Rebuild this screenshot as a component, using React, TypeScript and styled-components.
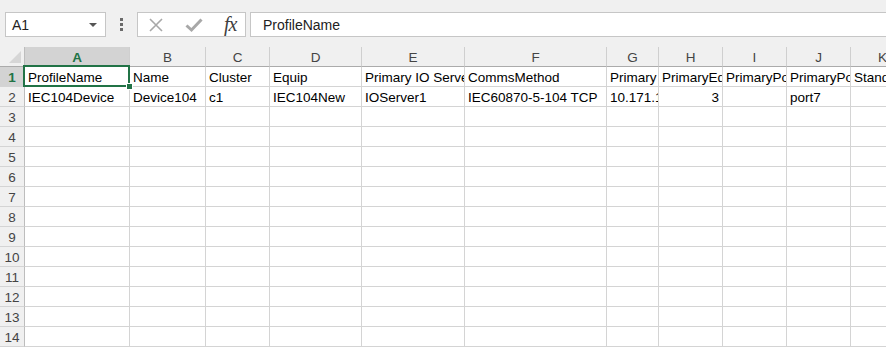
import styled, { createGlobalStyle } from "styled-components";

const GREEN = "#217346";
const GRID = "#d4d4d4";

const GlobalStyle = createGlobalStyle`
  html, body {
    margin: 0;
    padding: 0;
    background: #ffffff;
  }
  body {
    font-family: "Liberation Sans", Arial, sans-serif;
    color: #000;
  }
`;

const Window = styled.div`
  width: 886px;
  height: 357px;
  overflow: hidden;
  background: #ffffff;
`;

const Toolbar = styled.div`
  height: 47px;
  box-sizing: border-box;
  padding: 12px 0 10px 5px;
  background: #f0f0f0;
  display: flex;
  align-items: stretch;
`;

const NameBox = styled.div`
  width: 101px;
  box-sizing: border-box;
  border: 1px solid #c6c6c6;
  background: #fff;
  display: flex;
  align-items: center;
  justify-content: space-between;
  padding: 0 6px 0 6px;
  font-size: 14px;
  color: #222;
`;

const Caret = styled.span`
  width: 0;
  height: 0;
  border-left: 4px solid transparent;
  border-right: 4px solid transparent;
  border-top: 4px solid #555;
  margin-right: 2px;
`;

const Grip = styled.div`
  width: 31px;
  display: flex;
  align-items: center;
  justify-content: center;
`;

const FxBox = styled.div`
  width: 109px;
  box-sizing: border-box;
  border: 1px solid #c6c6c6;
  background: #fff;
  display: flex;
  align-items: center;
  padding-left: 10px;
  gap: 21px;
  margin-right: 4px;
`;

const Fx = styled.span`
  font-family: "Liberation Serif", "Times New Roman", serif;
  font-style: italic;
  font-size: 20px;
  color: #404040;
  letter-spacing: -1px;
  margin-left: 0;
`;

const FormulaInput = styled.div`
  flex: 1;
  box-sizing: border-box;
  border: 1px solid #c6c6c6;
  border-right: none;
  background: #fff;
  display: flex;
  align-items: center;
  padding-left: 12px;
  font-size: 14px;
  color: #222;
`;

const Sheet = styled.div<{ $cols: number[] }>`
  display: grid;
  grid-template-columns: ${(p) => p.$cols.map((c) => `${c}px`).join(" ")};
  grid-auto-rows: 20px;
  width: max-content;
  font-size: 13.5px;
`;

const Corner = styled.div`
  background: #f0f0f0;
  border-right: 1px solid #bdbdbd;
  border-bottom: 1px solid #ababab;
  box-sizing: border-box;
  display: flex;
  align-items: flex-end;
  justify-content: flex-end;
  padding: 0 3px 3px 0;
`;

const ColHeader = styled.div<{ $selected?: boolean }>`
  box-sizing: border-box;
  background: ${(p) => (p.$selected ? "#d3d3d3" : "#f0f0f0")};
  border-right: 1px solid #cfcfcf;
  border-bottom: 1px solid #ababab;
  display: flex;
  align-items: center;
  justify-content: center;
  padding-top: 1px;
  color: ${(p) => (p.$selected ? GREEN : "#444")};
  font-weight: ${(p) => (p.$selected ? 700 : 400)};
`;

const RowHeader = styled.div<{ $selected?: boolean }>`
  box-sizing: border-box;
  background: ${(p) => (p.$selected ? "#d3d3d3" : "#f0f0f0")};
  border-right: 1px solid #bdbdbd;
  border-bottom: 1px solid #d4d4d4;
  display: flex;
  align-items: center;
  justify-content: center;
  padding-top: 1px;
  color: ${(p) => (p.$selected ? GREEN : "#444")};
  font-weight: ${(p) => (p.$selected ? 700 : 400)};
`;

const Cell = styled.div<{ $align?: "left" | "right"; $active?: boolean }>`
  position: relative;
  box-sizing: border-box;
  border-right: 1px solid ${GRID};
  border-bottom: 1px solid ${GRID};
  padding: 2px 3px 0 3px;
  line-height: 18px;
  white-space: nowrap;
  overflow: ${(p) => (p.$active ? "visible" : "hidden")};
  text-align: ${(p) => p.$align ?? "left"};
  z-index: ${(p) => (p.$active ? 2 : 0)};

  ${(p) =>
    p.$active &&
    `
    &::after {
      content: '';
      position: absolute;
      left: -2px;
      top: -2px;
      right: -1px;
      bottom: -1px;
      border: 2px solid ${GREEN};
    }
    &::before {
      content: '';
      position: absolute;
      right: -4px;
      bottom: -4px;
      width: 5px;
      height: 5px;
      background: ${GREEN};
      border: 1px solid #fff;
      z-index: 3;
    }
  `}
`;

const COLS = [25, 105, 76, 64, 92, 103, 142, 52, 64, 64, 64, 64];
const LETTERS = ["A", "B", "C", "D", "E", "F", "G", "H", "I", "J", "K"];

type CellData = { text: string; align?: "left" | "right" };

// texts as far as the narrow columns show them
const ROWS: CellData[][] = [
  [
    { text: "ProfileName" },
    { text: "Name" },
    { text: "Cluster" },
    { text: "Equip" },
    { text: "Primary IO Serve" },
    { text: "CommsMethod" },
    { text: "Primary" },
    { text: "PrimaryEq" },
    { text: "PrimaryPo" },
    { text: "PrimaryPo" },
    { text: "Stand" },
  ],
  [
    { text: "IEC104Device" },
    { text: "Device104" },
    { text: "c1" },
    { text: "IEC104New" },
    { text: "IOServer1" },
    { text: "IEC60870-5-104 TCP" },
    { text: "10.171.1" },
    { text: "3", align: "right" },
    { text: "" },
    { text: "port7" },
    { text: "" },
  ],
];

function CloseIcon() {
  return (
    <svg width="16" height="16" viewBox="0 0 16 16">
      <path d="M2 2 L14 14 M14 2 L2 14" stroke="#a8a8a8" strokeWidth="1.6" fill="none" />
    </svg>
  );
}

function CheckIcon() {
  return (
    <svg width="18" height="16" viewBox="0 0 18 16">
      <path d="M1.5 8.5 L6.5 13 L16.5 2.5" stroke="#a8a8a8" strokeWidth="3" fill="none" />
    </svg>
  );
}

function GripDots() {
  return (
    <svg width="3" height="13" viewBox="0 0 3 13">
      <rect x="0" y="0" width="3" height="3" fill="#6a6a6a" />
      <rect x="0" y="5" width="3" height="3" fill="#6a6a6a" />
      <rect x="0" y="10" width="3" height="3" fill="#6a6a6a" />
    </svg>
  );
}

function CornerMark() {
  return (
    <svg width="12" height="12" viewBox="0 0 12 12">
      <polygon points="12,0 12,12 0,12" fill="#d6d6d6" />
    </svg>
  );
}

export default function App() {
  const rowCount = 14;
  return (
    <>
      <GlobalStyle />
      <Window>
        <Toolbar>
          <NameBox>
            <span>A1</span>
            <Caret />
          </NameBox>
          <Grip>
            <GripDots />
          </Grip>
          <FxBox>
            <CloseIcon />
            <CheckIcon />
            <Fx>fx</Fx>
          </FxBox>
          <FormulaInput>ProfileName</FormulaInput>
        </Toolbar>
        <Sheet $cols={COLS}>
          <Corner>
            <CornerMark />
          </Corner>
          {LETTERS.map((l) => (
            <ColHeader key={l} $selected={l === "A"}>
              {l}
            </ColHeader>
          ))}
          {Array.from({ length: rowCount }, (_, r) => (
            <Row key={r} index={r} />
          ))}
        </Sheet>
      </Window>
    </>
  );
}

function Row({ index }: { index: number }) {
  const data = ROWS[index];
  return (
    <>
      <RowHeader $selected={index === 0}>{index + 1}</RowHeader>
      {LETTERS.map((l, c) => {
        const cell = data ? data[c] : undefined;
        return (
          <Cell key={l} $align={cell?.align} $active={index === 0 && c === 0}>
            {cell?.text}
          </Cell>
        );
      })}
    </>
  );
}
